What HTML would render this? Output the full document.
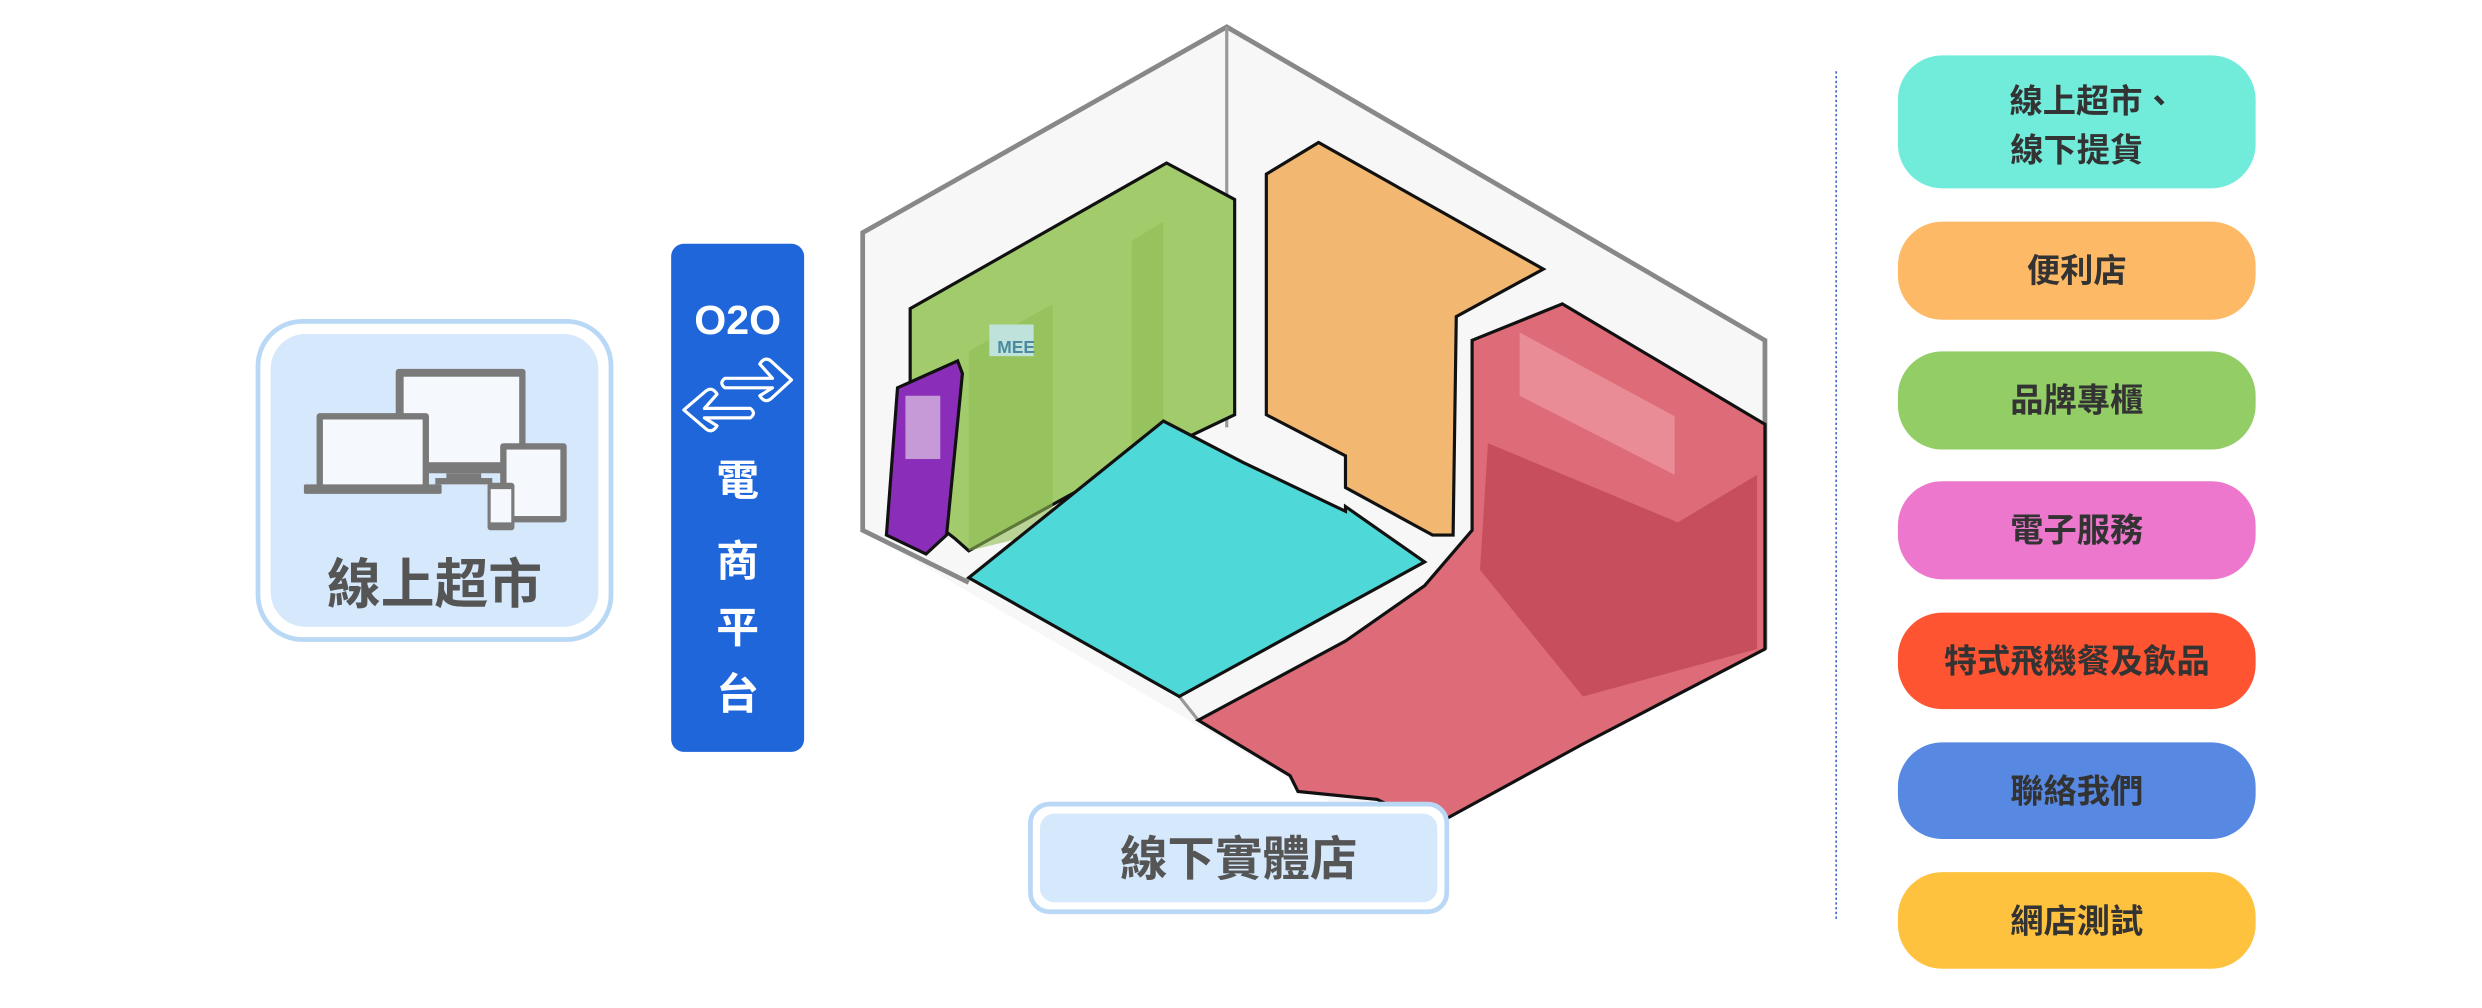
<!DOCTYPE html>
<html><head><meta charset="utf-8"><style>
html,body{margin:0;padding:0;background:#fff;}
svg{display:block;}
text{font-family:"Liberation Sans","Noto Sans CJK TC",sans-serif;}
</style></head><body>
<svg width="2482" height="1008" viewBox="0 0 1568 636.8" xmlns="http://www.w3.org/2000/svg">
<!-- left box -->
<rect x="163" y="203" width="223" height="201" rx="28" fill="#fff" stroke="#b9d8f6" stroke-width="3"/>
<rect x="171" y="211" width="207" height="185" rx="22" fill="#d6e8fb"/>
<!-- devices -->
<rect x="250" y="233" width="82" height="66" rx="2" fill="#7a7a7a"/>
<rect x="255" y="238" width="73" height="54" fill="#f5f8fc"/>
<rect x="282" y="299" width="22" height="6" fill="#7a7a7a"/>
<rect x="275" y="302" width="36" height="4" fill="#7a7a7a"/>
<rect x="200" y="261" width="71" height="50" rx="2" fill="#7a7a7a"/>
<rect x="204" y="265" width="63" height="43" fill="#f5f8fc"/>
<rect x="192" y="306" width="87" height="6" rx="1" fill="#7a7a7a"/>
<rect x="316" y="280" width="42" height="50" rx="2" fill="#7a7a7a"/>
<rect x="320" y="284" width="34" height="42" fill="#f5f8fc"/>
<rect x="308" y="305" width="17" height="30" rx="2" fill="#7a7a7a"/>
<rect x="310" y="309" width="13" height="21" fill="#f5f8fc"/>
<text x="274.5" y="381" font-size="34" font-weight="bold" fill="#555" text-anchor="middle">線上超市</text>
<!-- blue box -->
<rect x="424" y="154" width="84" height="321" rx="8" fill="#1f66db"/>
<text x="466" y="211" font-size="26" font-weight="bold" fill="#fff" text-anchor="middle">O2O</text>
<g fill="none" stroke="#fff" stroke-width="2" stroke-linejoin="round">
<path d="M458 239 L488 239 L480 230 Q483 225 487 228 L500 240 L487 252 Q483 255 480 250 L488 245 L458 245 Q454 242 458 239 Z"/>
<path d="M474 258 L445 258 L453 249 Q450 244 446 247 L432 259 L446 271 Q450 274 453 269 L445 264 L474 264 Q478 261 474 258 Z"/>
</g>
<g font-size="27" font-weight="bold" fill="#fff" text-anchor="middle">
<text x="466" y="313">電</text><text x="466" y="364">商</text><text x="466" y="406">平</text><text x="466" y="448">台</text>
</g>
<!-- room walls -->
<polygon points="545,147 775,17 1115,215 1115,410 880,530 545,335" fill="#f7f7f7"/>
<polyline points="612,368 545,335 545,147 775,17 1115,215 1115,410" fill="none" stroke="#888" stroke-width="3"/>
<line x1="745" y1="440" x2="757" y2="455" stroke="#999" stroke-width="2"/>
<line x1="775" y1="17" x2="775" y2="270" stroke="#999" stroke-width="2"/>
<!-- green -->
<polygon points="575,195 737,103 780,126 780,262 690,305 612,348 603,340 590,330 595,260 575,250" fill="#a2cc6c" stroke="#111" stroke-width="2"/>
<polygon points="612,222 665,192 665,335 612,348" fill="#8fbd55" opacity=".6"/>
<polygon points="715,152 735,140 735,270 715,280" fill="#8fbd55" opacity=".6"/>
<rect x="625" y="205" width="28" height="20" fill="#bfe3da"/>
<text x="630" y="223" font-size="11" font-weight="bold" fill="#4b8aa0">MEE</text>
<!-- purple kiosk -->
<polygon points="567,245 605,228 608,236 598,338 585,350 560,338" fill="#8a2db8" stroke="#111" stroke-width="2"/>
<rect x="572" y="250" width="22" height="40" fill="#c59ad6"/>
<!-- orange -->
<polygon points="800,110 833,90 975,170 920,200 918,338 905,338 850,308 850,288 800,262" fill="#f2b872" stroke="#111" stroke-width="2"/>
<!-- cyan floor -->
<polygon points="612,365 735,266 785,292 850,323 850,320 900,355 745,440" fill="#4fd8d8" stroke="#111" stroke-width="2"/>
<!-- red -->
<polygon points="930,215 987,192 1115,268 1115,410 1000,470 905,522 870,505 820,500 815,490 757,455 850,405 900,370 930,335" fill="#de6b78" stroke="#111" stroke-width="2"/>
<polygon points="940,280 1060,330 1110,300 1110,410 1000,440 935,360" fill="#b83c4a" opacity=".6"/>
<polygon points="960,210 1058,263 1058,300 960,250" fill="#e98c96"/>
<!-- bottom label -->
<rect x="651" y="508" width="263" height="68" rx="12" fill="#fff" stroke="#b9d8f6" stroke-width="3"/>
<rect x="657" y="514" width="251" height="56" rx="9" fill="#d6e8fb"/>
<text x="782.5" y="553" font-size="30" font-weight="bold" fill="#555" text-anchor="middle">線下實體店</text>
<!-- dotted line -->
<line x1="1160" y1="45" x2="1160" y2="582" stroke="#3a62c8" stroke-width="1" stroke-dasharray="1.5,1.5"/>
<!-- buttons -->
<g font-size="21" font-weight="bold" fill="#333" text-anchor="middle">
<rect x="1199" y="35" width="226" height="84" rx="28" fill="#71ecdb"/>
<text x="1312" y="71" dx="10">線上超市、</text><text x="1312" y="102">線下提貨</text>
<rect x="1199" y="140" width="226" height="62" rx="28" fill="#fdb966"/>
<text x="1312" y="178">便利店</text>
<rect x="1199" y="222" width="226" height="62" rx="28" fill="#92cd66"/>
<text x="1312" y="260">品牌專櫃</text>
<rect x="1199" y="304" width="226" height="62" rx="28" fill="#ec77cc"/>
<text x="1312" y="342">電子服務</text>
<rect x="1199" y="387" width="226" height="61" rx="28" fill="#fe5432"/>
<text x="1312" y="425">特式飛機餐及飲品</text>
<rect x="1199" y="469" width="226" height="61" rx="28" fill="#5788e2"/>
<text x="1312" y="507">聯絡我們</text>
<rect x="1199" y="551" width="226" height="61" rx="28" fill="#fec23e"/>
<text x="1312" y="589">網店測試</text>
</g>
</svg>
</body></html>
